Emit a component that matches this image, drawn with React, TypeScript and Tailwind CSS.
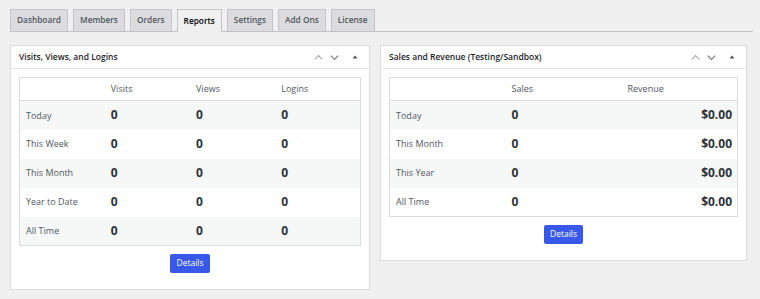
import React from "react";

const font = { fontFamily: '"Open Sans", "Noto Sans", sans-serif' };

const tabs = ["Dashboard", "Members", "Orders", "Reports", "Settings", "Add Ons", "License"];

const HeaderIcons: React.FC = () => (
  <div className="flex items-center gap-[5px]">
    <svg width="11" height="11" viewBox="0 0 12 12" fill="none" stroke="#a7aaad" strokeWidth="1.3">
      <path d="M2 8 L6 4 L10 8" />
    </svg>
    <svg width="11" height="11" viewBox="0 0 12 12" fill="none" stroke="#787c82" strokeWidth="1.3">
      <path d="M2 4 L6 8 L10 4" />
    </svg>
    <svg width="10" height="10" viewBox="0 0 10 10" className="ml-[5px]">
      <path d="M2.5 6.5 L5 3.5 L7.5 6.5 Z" fill="#50575e" />
    </svg>
  </div>
);

const Panel: React.FC<{ title: string; width: string; children: React.ReactNode }> = ({ title, width, children }) => (
  <div className={`${width} bg-white border border-[#dcdcde] self-start`}>
    <div className="h-[23px] flex items-center justify-between pl-[8px] pr-[9px] border-b border-[#e5e5e5]">
      <span className="text-[8.5px] font-semibold text-[#1d2327]">{title}</span>
      <HeaderIcons />
    </div>
    <div className="px-[8px] pt-[8px] pb-[16px]">{children}</div>
  </div>
);

const DetailsButton: React.FC = () => (
  <div className="flex justify-center mt-[8px]">
    <button className="h-[19px] px-[6px] bg-[#3858e9] rounded-[2px] text-white text-[8.5px] leading-none">
      Details
    </button>
  </div>
);

const App: React.FC = () => {
  const visits = ["Today", "This Week", "This Month", "Year to Date", "All Time"];
  const sales = ["Today", "This Month", "This Year", "All Time"];

  return (
    <div className="w-[760px] h-[299px] bg-[#f0f0f1] overflow-hidden" style={font}>
      <div className="pt-[9px] px-[10px]">
        <div className="flex gap-[5px] border-b border-[#c3c4c7] mr-[-3px]">
          {tabs.map((t) => (
            <div
              key={t}
              className={`h-[22px] px-[6px] flex items-center text-[8.3px] font-semibold border border-[#c3c4c7] border-b-0 mb-[-1px] ${
                t === "Reports"
                  ? "bg-[#f0f0f1] text-[#000] h-[23px] border-b border-b-[#f0f0f1]"
                  : "bg-[#dcdcde] text-[#50575e]"
              }`}
            >
              {t}
            </div>
          ))}
        </div>
      </div>

      <div className="flex gap-[10px] pl-[10px] pt-[13px]">
        <Panel title="Visits, Views, and Logins" width="w-[360px]">
          <table className="w-full table-fixed border border-[#dcdcde] border-collapse">
            <thead>
              <tr className="h-[23px] border-b border-[#dcdcde]">
                <th className="w-1/4"></th>
                {["Visits", "Views", "Logins"].map((h) => (
                  <th key={h} className="w-1/4 text-left pl-[6px] text-[9px] font-normal text-[#50575e]">
                    {h}
                  </th>
                ))}
              </tr>
            </thead>
            <tbody>
              {visits.map((r, i) => (
                <tr key={r} className={`h-[29px] ${i % 2 === 0 ? "bg-[#f6f7f7]" : "bg-white"}`}>
                  <td className="pl-[6px] text-[9px] text-[#50575e]">{r}</td>
                  {[0, 1, 2].map((c) => (
                    <td key={c} className="pl-[6px] text-[12px] font-bold text-[#2c3338]">
                      0
                    </td>
                  ))}
                </tr>
              ))}
            </tbody>
          </table>
          <DetailsButton />
        </Panel>

        <Panel title="Sales and Revenue (Testing/Sandbox)" width="w-[367px]">
          <table className="w-full table-fixed border border-[#dcdcde] border-collapse">
            <thead>
              <tr className="h-[23px] border-b border-[#dcdcde]">
                <th className="w-1/3"></th>
                <th className="w-1/3 text-left pl-[6px] text-[9px] font-normal text-[#50575e]">Sales</th>
                <th className="w-1/3 text-left pl-[6px] text-[9px] font-normal text-[#50575e]">Revenue</th>
              </tr>
            </thead>
            <tbody>
              {sales.map((r, i) => (
                <tr key={r} className={`h-[29px] ${i % 2 === 0 ? "bg-[#f6f7f7]" : "bg-white"}`}>
                  <td className="pl-[6px] text-[9px] text-[#50575e]">{r}</td>
                  <td className="pl-[6px] text-[12px] font-bold text-[#2c3338]">0</td>
                  <td className="pr-[5px] text-right text-[12px] font-bold text-[#2c3338]">$0.00</td>
                </tr>
              ))}
            </tbody>
          </table>
          <DetailsButton />
        </Panel>
      </div>
    </div>
  );
};

export default App;
